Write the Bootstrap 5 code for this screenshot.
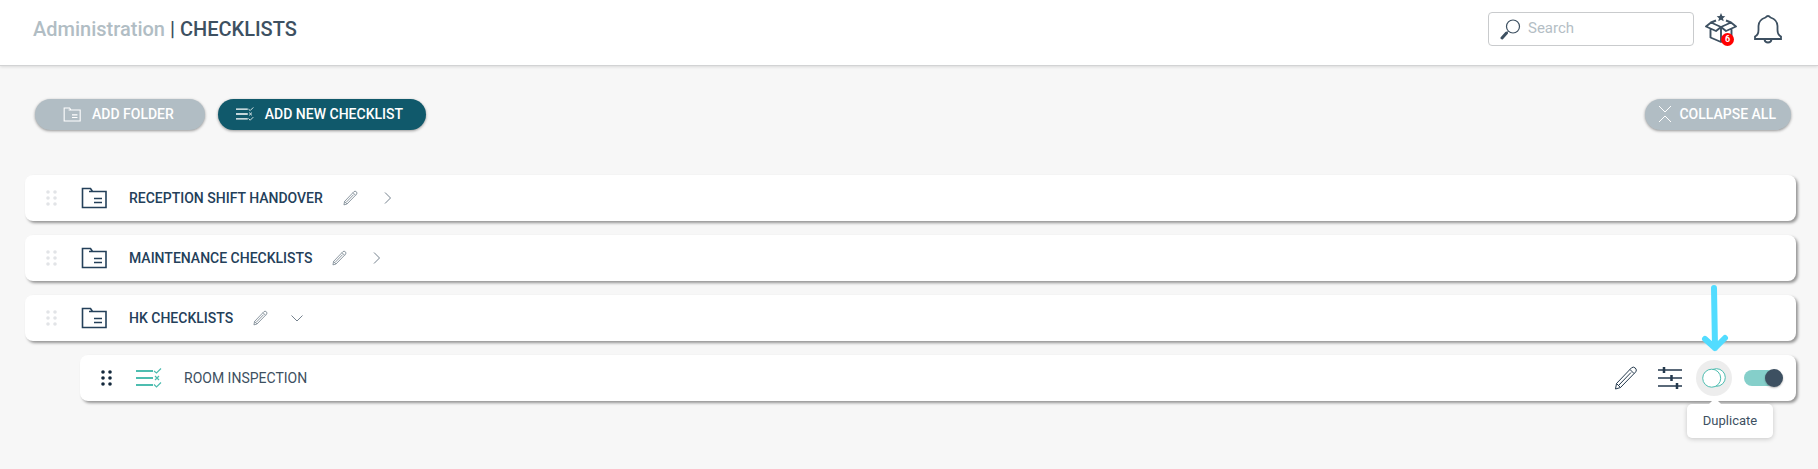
<!DOCTYPE html>
<html lang="en">
<head>
<meta charset="utf-8">
<meta name="viewport" content="width=device-width, initial-scale=1">
<title>Administration | Checklists</title>
<link href="https://cdn.jsdelivr.net/npm/bootstrap@5.3.0/dist/css/bootstrap.min.css" rel="stylesheet">
<style>
  body { background: #f7f7f7; font-family: Roboto, "Liberation Sans", sans-serif; font-size: 15px; line-height: 20px; color: #3d5061; min-height: 100vh; }
  svg { display: block; flex: none; fill: none; stroke: currentColor; }
  .topbar { height: 66px; padding: 0 35px 7px 33px; background: #fff; border-bottom: 1px solid #d2d3d4; box-shadow: 0 1px 3px rgba(0,0,0,.12); }
  .crumbs { font-size: 20px; line-height: 24px; font-weight: 500; }
  .crumbs a { color: #b1bdc4; text-decoration: none; }
  .search-box { width: 206px; height: 34px; margin-right: 11px; padding-left: 11px; background: #fff; border: 1px solid #c9cbcd; border-radius: 4px; }
  .search-box input { min-width: 0; flex: 1; border: 0; outline: 0; background: none; padding: 0 0 2px 7px; font-size: 15px; color: #3d5061; }
  .search-box input::placeholder { color: #b4bec5; opacity: 1; }
  .plain { border: 0; padding: 0; background: none; color: inherit; }
  .count { position: absolute; right: 3px; bottom: -1px; width: 13px; height: 13px; border-radius: 50%; background: #f00; color: #fff; font-size: 9px; line-height: 13px; font-weight: 700; text-align: center; }
  .toolbar { padding: 33px 27px 0 35px; gap: 13px; }
  .pill { height: 31px; display: flex; align-items: center; border: 0; border-radius: 16px; padding: 0 0 1px; color: #fff; font-size: 14px; font-weight: 500; background: #b1bdc4; box-shadow: 0 1px 3px rgba(0,0,0,.4); }
  .pill:hover { color: #fff; background: #a4b1b9; }
  .pill-folder { padding-right: 31px; padding-left: 28px; gap: 11px; }
  .pill-new { padding-right: 23px; padding-left: 18px; gap: 11px; background: #10596b; }
  .pill-new:hover { background: #0d4c5c; }
  .pill-collapse { padding-right: 15px; padding-left: 13px; gap: 7px; }
  .lists { margin: 45px 22px 0 25px; display: grid; gap: 14px; }
  .entry { height: 46px; padding: 0 13px 0 21px; background: #fff; border-radius: 8px; box-shadow: 2px 2px 3px rgba(0,0,0,.4); display: flex; align-items: center; }
  .entry-child { margin-left: 55px; }
  .handle { color: #e2e4e7; }
  .handle-dark { color: #13283c; }
  .handle svg, .handle-dark svg { fill: currentColor; stroke: none; }
  .kind { margin: 0 22px 0 23px; color: #24405a; }
  .kind-list { color: #4dbdb0; }
  .entry h2 { margin: 0; font-size: 14px; line-height: 20px; font-weight: 500; color: #24405a; }
  .entry .entry-name { font-weight: 400; color: #3d5061; }
  .soft { color: #74818d; }
  .edit { margin: 0 23px 0 20px; }
  .ink { color: #24394d; }
  .tune { margin-left: 20px; }
  .dup { width: 36px; height: 36px; margin: 0 12px 0 14px; border-radius: 50%; background: #ededed; color: #4dbdb0; display: grid; place-items: center; }
  .switch-box { appearance: none; position: relative; width: 39px; height: 18px; margin: 0; }
  .switch-box::before { content: ""; position: absolute; inset: 1px 7px 1px 0; border-radius: 8px; background: #85cfca; }
  .switch-box::after { content: ""; position: absolute; right: 0; top: 0; width: 18px; height: 18px; border-radius: 50%; background: #3d5061; box-shadow: 0 1px 2px rgba(0,0,0,.3); }
  .switch-box:not(:checked)::after { right: 21px; }
  .tip { position: absolute; top: 44px; left: 5px; width: 86px; padding: 7px 0; border-radius: 5px; background: #fff; color: #3d5061; font-size: 13px; text-align: center; box-shadow: 0 1px 5px rgba(0,0,0,.2); }
  .tip::before { content: ""; position: absolute; left: 22px; top: -6px; border: 6px solid transparent; border-top: 0; border-bottom-color: #fff; }
  .pointer { position: absolute; left: 19px; top: -75px; color: #52dcff; pointer-events: none; }
</style>
</head>
<body>
<svg width="0" height="0" class="position-absolute" aria-hidden="true">
  <symbol id="folder" viewBox="0 0 26 22"><path d="M1.500 20.500V1.500H9.500L11.500 4.500H25V20.500ZM8 4.500H12" stroke-width="1.600"/><path d="M13 11.500H21M13 15.500H21" stroke-width="1.600"/></symbol>
  <symbol id="checks" viewBox="0 0 26 20"><path d="M0 3H17M0 10H17M0 17H17" stroke-width="2"/><path d="M18 3L20.500 5L25 .5M19 8L23 12M23 8L19 12M18 16.500L20.500 19L25 14.500" stroke-width="1.200"/></symbol>
  <symbol id="dots" viewBox="0 0 12 16"><circle cx="2" cy="2" r="1.800"/><circle cx="9" cy="2" r="1.800"/><circle cx="2" cy="8" r="1.800"/><circle cx="9" cy="8" r="1.800"/><circle cx="2" cy="14" r="1.800"/><circle cx="9" cy="14" r="1.800"/></symbol>
  <symbol id="pencil" viewBox="0 0 24 24"><path d="M1.500 23L2.500 17.500L17.500 1.800Q19.300.300 21.300 2Q23.200 4 21.800 5.800L6.500 21.500ZM2.500 17.500L6.500 21.500M16 3.500L20 7.500M5 19L17 6.500"/></symbol>
</svg>

<header class="topbar d-flex align-items-center justify-content-between">
  <nav class="crumbs" aria-label="Breadcrumb"><a href="#">Administration</a> | <span>CHECKLISTS</span></nav>
  <div class="d-flex align-items-center">
    <label class="search-box d-flex align-items-center">
      <svg width="21" height="21" viewBox="0 0 21 21"><circle cx="13" cy="7.500" r="6.500" stroke-width="1.200"/><path d="M8.500 12L6.500 14"/><path d="M6.500 14L2 19" stroke-width="3" stroke-linecap="round"/></svg>
      <input type="text" placeholder="Search" aria-label="Search">
    </label>
    <button class="plain position-relative" type="button" aria-label="What's new">
      <svg width="32" height="32" viewBox="0 0 32 32" stroke-width="1.900" stroke-linejoin="round"><path d="M16 0L17.300 2.900L20.300 3.200L18 5.300L18.700 8.300L16 6.800L13.300 8.300L14 5.300L11.700 3.200L14.700 2.900Z" fill="currentColor" stroke="none"/><path d="M11 7.500L6 9.500L16 14L26 9.500L21 7.500M6 9.500L1 13.500L11 18L16 14L21 18L31 13.500L26 9.500M5.500 16V24.500L16 29L26.500 24.500V16M16 14V29"/></svg>
      <span class="count">6</span>
    </button>
    <button class="plain ms-3" type="button" aria-label="Notifications">
      <svg width="30" height="30" viewBox="0 0 30 30" stroke-width="1.800"><path d="M2 25V22.500Q5.500 21 5.500 16V12Q5.500 6 12.500 3.500Q15 .5 17.500 3.500Q24.500 6 24.500 12V16Q24.500 21 28 22.500V25ZM11.500 25.500Q12 28.500 15 28.500Q18 28.500 18.500 25.500"/></svg>
    </button>
  </div>
</header>

<main>
  <div class="toolbar d-flex align-items-center">
    <button class="pill pill-folder" type="button"><svg width="18" height="15"><use href="#folder"/></svg>ADD FOLDER</button>
    <button class="pill pill-new" type="button"><svg width="18" height="14" stroke-width="1.500"><use href="#checks"/></svg>ADD NEW CHECKLIST</button>
    <button class="pill pill-collapse ms-auto" type="button"><svg width="14" height="18" viewBox="0 0 14 18"><path d="M1 1L7 7L13 1M1 17L7 11L13 17"/></svg>COLLAPSE ALL</button>
  </div>

  <section class="lists">
    <article class="entry">
      <span class="handle"><svg width="12" height="16"><use href="#dots"/></svg></span>
      <svg class="kind" width="26" height="22"><use href="#folder"/></svg>
      <h2>RECEPTION SHIFT HANDOVER</h2>
      <button class="plain soft edit" type="button" aria-label="Rename"><svg width="15" height="16" stroke-width="1.300"><use href="#pencil"/></svg></button>
      <button class="plain soft" type="button" aria-label="Expand"><svg width="12" height="12" viewBox="0 0 12 12"><path d="M4 .5L9.500 6L4 11.500"/></svg></button>
    </article>
    <article class="entry">
      <span class="handle"><svg width="12" height="16"><use href="#dots"/></svg></span>
      <svg class="kind" width="26" height="22"><use href="#folder"/></svg>
      <h2>MAINTENANCE CHECKLISTS</h2>
      <button class="plain soft edit" type="button" aria-label="Rename"><svg width="15" height="16" stroke-width="1.300"><use href="#pencil"/></svg></button>
      <button class="plain soft" type="button" aria-label="Expand"><svg width="12" height="12" viewBox="0 0 12 12"><path d="M4 .5L9.500 6L4 11.500"/></svg></button>
    </article>
    <article class="entry">
      <span class="handle"><svg width="12" height="16"><use href="#dots"/></svg></span>
      <svg class="kind" width="26" height="22"><use href="#folder"/></svg>
      <h2>HK CHECKLISTS</h2>
      <button class="plain soft edit" type="button" aria-label="Rename"><svg width="15" height="16" stroke-width="1.300"><use href="#pencil"/></svg></button>
      <button class="plain soft" type="button" aria-label="Collapse"><svg width="12" height="12" viewBox="0 0 12 12"><path d="M.5 3.500L6 9L11.500 3.500"/></svg></button>
    </article>
    <article class="entry entry-child">
      <span class="handle-dark"><svg width="12" height="16"><use href="#dots"/></svg></span>
      <svg class="kind kind-list" width="26" height="20"><use href="#checks"/></svg>
      <h2 class="entry-name">ROOM INSPECTION</h2>
      <div class="d-flex align-items-center ms-auto">
        <button class="plain ink" type="button" aria-label="Edit"><svg width="24" height="24" stroke-width="1"><use href="#pencil"/></svg></button>
        <button class="plain ink tune" type="button" aria-label="Settings"><svg width="24" height="24" viewBox="0 0 24 24"><path d="M0 4H24M0 12H24M0 20H24" stroke-width="1.500"/><path d="M6 1V7M13.500 9V15M19 17V23" stroke-width="2.500"/></svg></button>
        <div class="position-relative">
          <button class="plain dup" type="button" aria-label="Duplicate" aria-describedby="dup-tip"><svg width="24" height="20" viewBox="0 0 24 20"><circle cx="14.500" cy="9.500" r="8.800" fill="#fff"/><circle cx="9.700" cy="10.200" r="9" fill="#fff"/></svg></button>
          <div class="tip" id="dup-tip" role="tooltip">Duplicate</div>
          <svg class="pointer" width="28" height="68" viewBox="0 0 28 68" stroke-width="6" stroke-linecap="round" stroke-linejoin="round"><path d="M13 3L14 63M4 54L14 63L24 53"/></svg>
        </div>
        <input class="switch-box" type="checkbox" role="switch" checked aria-label="Checklist active">
      </div>
    </article>
  </section>
</main>
<script src="https://cdn.jsdelivr.net/npm/bootstrap@5.3.0/dist/js/bootstrap.bundle.min.js"></script>
</body>
</html>
